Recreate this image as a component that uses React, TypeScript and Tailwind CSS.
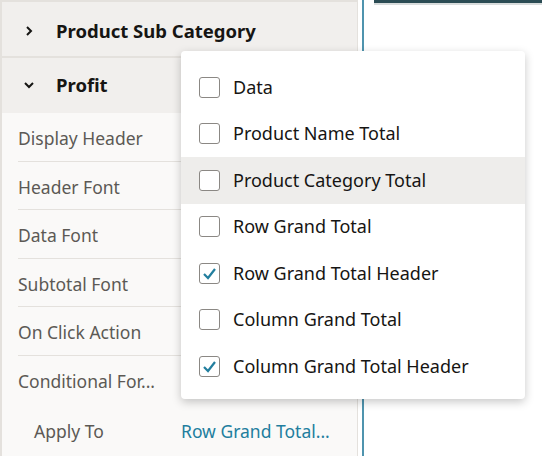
import React from "react";

const rows = ["Display Header", "Header Font", "Data Font", "Subtotal Font", "On Click Action", "Conditional For..."];
const items: [string, boolean, boolean][] = [
  ["Data", false, false],
  ["Product Name Total", false, false],
  ["Product Category Total", false, true],
  ["Row Grand Total", false, false],
  ["Row Grand Total Header", true, false],
  ["Column Grand Total", false, false],
  ["Column Grand Total Header", true, false],
];

export default function App() {
  return (
    <div className="relative w-[542px] h-[456px] bg-white overflow-hidden text-[#161513]" style={{ fontFamily: '"Noto Sans", sans-serif' }}>
      <div className="flex h-full">
        <div className="w-[358px] h-full bg-[#faf9f8] border-l-2 border-r border-[#e4e1dd] flex flex-col">
          <div className="h-[2px] bg-[#e4e1dd]" />
          <div className="h-[56px] pt-[4px] bg-[#f1efed] border-b-2 border-[#e4e1dd] flex items-center pl-[22px] gap-[22px]">
            <svg width="10" height="12" viewBox="0 0 10 12"><path d="M3 2l4 4-4 4" stroke="#161513" strokeWidth="2" fill="none" /></svg>
            <span className="text-[18.5px] font-bold">Product Sub Category</span>
          </div>
          <div className="h-[56px] bg-[#f1efed] flex items-center pl-[21px] gap-[21px]">
            <svg width="12" height="10" viewBox="0 0 12 10"><path d="M2 3l4 4 4-4" stroke="#161513" strokeWidth="2" fill="none" /></svg>
            <span className="text-[18.5px] font-bold">Profit</span>
          </div>
          <div className="pl-[16px]">
            {rows.map((r, i) => (
              <div key={r} className={`h-[48.5px] pt-[3px] flex items-center text-[17.5px] text-[#5c5955] ${i < rows.length - 1 ? "border-b border-[#e4e1dd]" : ""}`}>{r}</div>
            ))}
            <div className="h-[52px] pt-[2px] flex items-center text-[17.5px] text-[#5c5955]">
              <span className="w-[163px] pl-[16px]">Apply To</span>
              <span className="text-[#227e9e]">Row Grand Total...</span>
            </div>
          </div>
        </div>
        <div className="w-[4px]" />
        <div className="w-[2px] h-full bg-[#4f94ae]" />
        <div className="flex-1 pl-[10px]">
          <div className="h-[3px] bg-[#2b4c54]" />
          <div className="h-[2px] bg-[#d8dcdc]" />
        </div>
      </div>
      <div className="absolute left-[181px] top-[51px] w-[344px] h-[348px] bg-white rounded-[4px] shadow-[0_3px_10px_rgba(0,0,0,0.22)] pt-[13px]">
        {items.map(([t, c, h]) => (
          <div key={t} className={`h-[46.5px] flex items-center pl-[18px] gap-[13px] ${h ? "bg-[#eeedeb]" : ""}`}>
            <div className="w-[21px] h-[21px] border-[1.5px] border-[#8b8884] rounded-[3px] bg-white flex items-center justify-center">
              {c && <svg width="15" height="13" viewBox="0 0 15 13"><path d="M2 7l4 4 7-9" stroke="#227e9e" strokeWidth="2.2" fill="none" /></svg>}
            </div>
            <span className="text-[18px] text-[#161513]">{t}</span>
          </div>
        ))}
      </div>
    </div>
  );
}
